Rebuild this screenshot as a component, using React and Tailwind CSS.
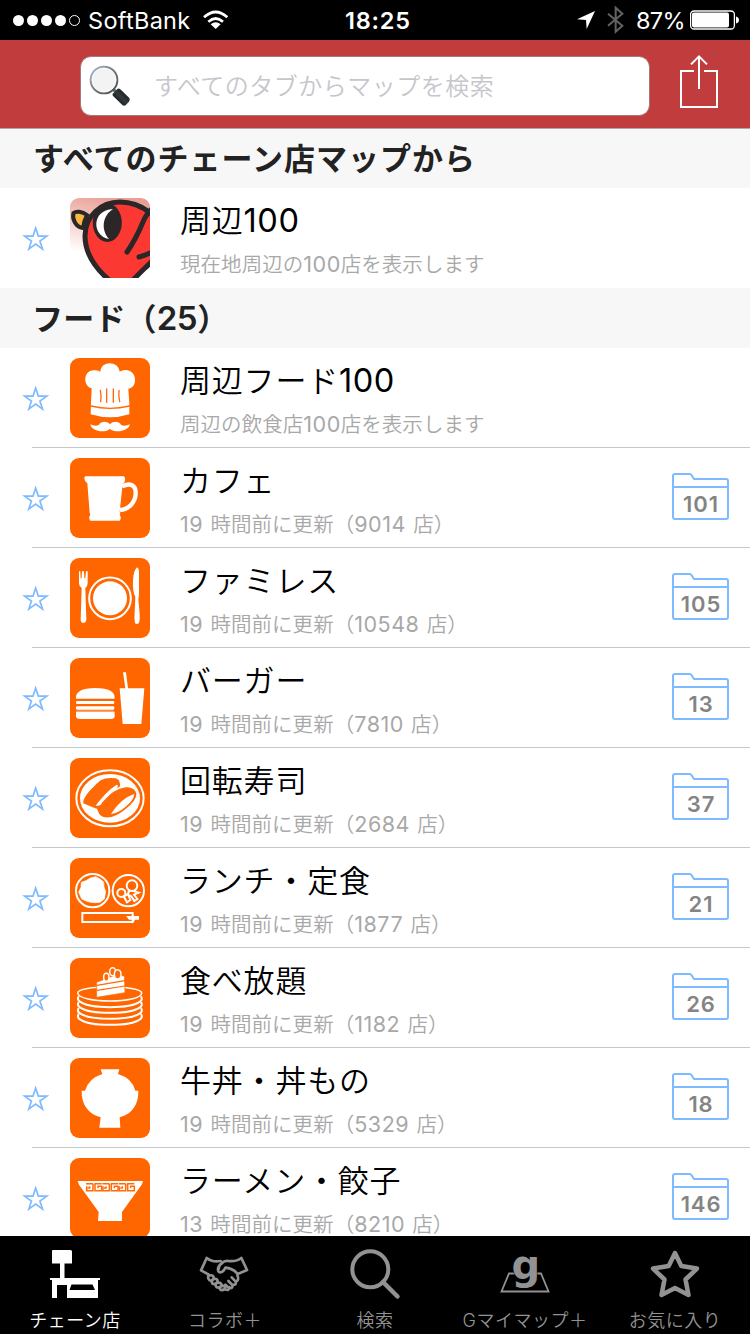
import React from "react";

const FONT = "font-['Inter','Noto_Sans_CJK_JP',sans-serif]";

function StatusBar() {
  return (
    <div className="flex h-10 items-center bg-black pl-[13px] pr-[11px] text-white">
      <div className="flex w-[332px] items-center">
        <div className="flex gap-[3px]">
          {[0, 1, 2, 3].map((n) => (
            <i key={n} className="h-[11px] w-[11px] rounded-full bg-white" />
          ))}
          <i className="h-[11px] w-[11px] rounded-full border border-white" />
        </div>
        <span className="ml-[8px] mt-px text-[23.5px] leading-10 tracking-[0.3px]">SoftBank</span>
        <svg className="ml-[12px]" width="26" height="20" viewBox="606 30 78 60">
          <g fill="none" stroke="#fff" strokeWidth="8">
            <path d="M609 52 Q644 20 679 52" />
            <path d="M622 65 Q644 46 666 65" />
          </g>
          <path d="M644 87 L629 73 Q644 61 659 73Z" fill="#fff" />
        </svg>
      </div>
      <span className="mt-px text-[23.5px] font-semibold leading-10 tracking-[0.8px]">18:25</span>
      <div className="ml-auto flex items-center">
        <svg width="18" height="18" viewBox="610 36 54 54">
          <path d="M664 36 L610 61 L637 63 L639 90Z" fill="#fff" />
        </svg>
        <svg className="ml-[12px]" width="18" height="28" viewBox="697 20 54 84">
          <path d="M700 43 L743 79 L723 97 V25 L743 43 L700 79" fill="none" stroke="#636363" strokeWidth="6" />
        </svg>
        <span className="ml-[11px] mt-px text-[23.5px] leading-10 tracking-[-0.6px]">87%</span>
        <svg className="ml-[5px]" width="49" height="20" viewBox="0 0 49 20">
          <rect x=".6" y="1" width="43.8" height="18" rx="3.5" fill="none" stroke="#fff" strokeWidth="1.3" />
          <rect x="2" y="2.6" width="37" height="14.8" rx="1.8" fill="#fff" />
          <path d="M46 6.5 Q49 7.5 49 10 Q49 12.5 46 13.5Z" fill="#fff" />
        </svg>
      </div>
    </div>
  );
}

function SearchHeader() {
  return (
    <div className="flex h-[88px] bg-[#c13c3d] pl-[80px] pt-4">
      <div className="flex h-[60px] w-[570px] items-center rounded-[11px] border border-[#a87777] bg-white pl-[7px]">
        <svg width="44" height="44" viewBox="264 194 132 132">
          <defs>
            <linearGradient id="rim" x1="0" y1="0" x2="1" y2="1">
              <stop offset="0" stopColor="#a9cdf0" />
              <stop offset=".3" stopColor="#8b9096" />
              <stop offset="1" stopColor="#44484c" />
            </linearGradient>
            <linearGradient id="handle" x1="0" y1="1" x2="1" y2="0">
              <stop offset="0" stopColor="#050606" />
              <stop offset=".5" stopColor="#34393c" />
              <stop offset="1" stopColor="#0b0c0d" />
            </linearGradient>
          </defs>
          <path d="M338 268 L350 280" stroke="#60656a" strokeWidth="9" />
          <path d="M338 283 L353 268 Q357 266 361 270 L388 296 Q391 301 387 307 L377 318 Q372 321 367 317 L340 291 Q336 287 338 283Z" fill="url(#handle)" />
          <circle cx="312" cy="242" r="40" fill="#f3f3f4" stroke="url(#rim)" strokeWidth="6" />
          <circle cx="312" cy="242" r="36" fill="none" stroke="#fff" strokeWidth="2" />
        </svg>
        <span className="ml-[22px] mt-px text-[24px] font-[350] leading-[58px] tracking-[0.5px] text-[#c6c6cc]">すべてのタブからマップを検索</span>
      </div>
      <svg className="-mt-[2px] ml-[29px]" width="40" height="56" viewBox="912 162 120 168">
        <path d="M957 213 H918 V321 H1026 V213 H987 M972 267 V170 M948 193 L972 169 L996 193" fill="none" stroke="#fff" strokeWidth="6" />
      </svg>
    </div>
  );
}

function SectionTitle({ children, first }) {
  return (
    <div className={"flex h-[60px] items-center bg-[#f7f7f7] pl-[33px] pt-px text-[31px] font-bold tracking-[1px] text-[#222]" + (first ? " border-t border-[#b2a5a5]" : "")}>
      <span className="leading-[58px]">{children}</span>
    </div>
  );
}

/* Latin digits are set slightly larger than the kana and kanji around them. */
function Mixed({ text }) {
  return text.split(/([0-9]+)/).map((part, i) =>
    i % 2 ? (
      <span key={i} className="text-[1.05em] font-normal leading-none tracking-[0.5px]">{part}</span>
    ) : (
      part
    )
  );
}

const Bird = () => (
  <>
    <defs>
      <linearGradient id="sky" x1=".6" y1="0" x2=".4" y2="1">
        <stop offset="0" stopColor="#e99f96" />
        <stop offset=".35" stopColor="#f3cbc5" />
        <stop offset=".75" stopColor="#fff" />
      </linearGradient>
    </defs>
    <rect width="80" height="80" fill="url(#sky)" />
    <g stroke="#2b2627" strokeWidth="5" strokeLinecap="round">
      <path d="M39 82 C24 69 15 54 15 38 C15 18 31 4 50 4 C74 4 96 24 94 42 C93 56 79 65 63 82" fill="#fb3832" />
      <path d="M17 17 C12 13 6 13 3.500 15 C2 20 5 29 13 30 Q14 23 17 17Z" fill="#fbb840" strokeWidth="4" />
      <path d="M84 9 Q76 16 73 24 Q66 41 57 54 M69 59 Q76 57 84 53" fill="none" />
    </g>
    <ellipse cx="37.300" cy="24.700" rx="14.500" ry="19.300" fill="#2b2627" />
    <path d="M43 11 C21 12 22 38 39 41 C31 32 32 18 43 11Z" fill="#fff" />
  </>
);

const Chef = () => (
  <g transform="scale(.33333) translate(-210 -519)">
    <path d="M273 655 L275 610 C248 604 249 556 282 556 Q291 555 301 560 C303 526 355 526 359 560 C381 547 405 560 405 584 C405 602 395 610 385 611 L388 655 V688 Q330 706 272 688Z" fill="#fff" />
    <g fill="none" stroke="#ff6a06" strokeLinecap="round">
      <path d="M273 663 Q330 677 388 663" strokeWidth="4" />
      <path d="M301 616 Q305 634 302 650 M320 612 V652 M340 612 V652 M357 616 Q355 634 359 650" strokeWidth="4" />
    </g>
    <path d="M330 718 C319 707 304 709 297 719 Q287 726 271 718 C276 742 318 744 330 731 C342 744 384 742 390 718 Q373 726 363 719 C356 709 341 707 330 718Z" fill="#fff" />
  </g>
);

const Mug = () => (
  <g transform="scale(.33333) translate(-210 -24)">
    <path d="M256 79 H372 Q379 87 372 98 L368 101 L359 186 L361 190 L359 194 Q366 204 359 212 H271 Q264 205 271 195 L269 188 L262 100 Q250 90 254 81Z" fill="#fff" />
    <path d="M366 109 C391 97 407 106 407 127 C408 157 386 178 360 180" fill="none" stroke="#fff" strokeWidth="13" />
  </g>
);

const Plate = () => (
  <g transform="scale(.33333) translate(-210 -324)" fill="#fff">
    <circle cx="330" cy="445" r="62.500" fill="none" stroke="#fff" strokeWidth="6" />
    <circle cx="330" cy="445" r="51" />
    <path d="M237 364 H241 L242 385 H245 L246 364 H252 L253 385 H256 L258 364 H263 V399 Q263 409 256 414 L259 509 Q257 519 250 519 Q243 519 242 509 L245 414 Q237 409 237 399Z" />
    <path d="M411 352 Q416 354 417 362 V435 Q414 447 416 460 Q421 500 418 516 Q414 526 405 520 Q402 507 404 487 L406 440 Q397 425 399 389 Q401 361 411 352Z" />
  </g>
);

const Burger = () => (
  <g transform="scale(.33333) translate(-210 -24)" fill="#fff">
    <path d="M228 146 Q225 114 286 114 Q347 114 344 146Z" />
    <rect x="228" y="153" width="115" height="9" rx="4" />
    <rect x="228" y="169" width="115" height="10" rx="4" />
    <rect x="229" y="181" width="113" height="4" opacity=".3" />
    <path d="M228 185 H344 V198 Q344 207 333 207 H240 Q228 207 228 198Z" />
    <path d="M359 115 H376 L369 67 H378 L384 115 H433 L424 222 H368Z" />
  </g>
);

const Sushi = () => (
  <g transform="scale(.33333) translate(-210 -324)">
    <ellipse cx="330" cy="445" rx="101" ry="84" fill="none" stroke="#fff" strokeWidth="6" />
    <ellipse cx="330" cy="445" rx="90" ry="73" fill="#fff" />
    <path d="M250 460 C247 441 283 407 302 391 Q319 381 348 385 L357 391 L360 402 Q363 411 352 413 C338 415 303 443 287 467 L324 462 Q307 475 331 492 C352 480 371 446 409 430 Q411 451 377 477 Q342 506 315 502 C297 498 296 487 291 476 Q275 472 250 460Z" fill="#ff6a06" />
    <path d="M302 466 C313 440 354 411 384 412 Q406 415 409 431 C382 437 350 469 334 492 Q309 505 299 490Z" fill="#ff6a06" />
    <path d="M289 468 Q314 427 350 404 Q362 407 340 423 L298 466Z M333 492 Q363 445 402 432 Q404 448 376 471 Q355 489 333 492Z" fill="#fff" />
  </g>
);

const Lunch = () => (
  <g transform="scale(.33333) translate(-210 -24)" fill="none" stroke="#fff" strokeWidth="6">
    <circle cx="278" cy="122" r="50" />
    <path d="M271 84 L287 80 L300 87 L311 96 L312 111 L317 125 L313 147 L300 157 L286 158 L273 157 L260 154 L245 147 L236 126 L243 112 L244 97 L258 92Z" fill="#fff" strokeWidth="2" />
    <circle cx="385" cy="122" r="47" />
    <circle cx="396" cy="107" r="16" />
    <circle cx="364" cy="129" r="12" />
    <path d="M388 119 L384 133 L371 139 L381 157 L391 150 L385 135 L394 139 L403 153 L412 147 L402 134 L416 128 L400 123" strokeWidth="6" />
    <rect x="247" y="189" width="151" height="27" />
    <path d="M378 198 H417 V209 H405 L402 216 L396 209 H387Z" fill="#fff" stroke="none" />
  </g>
);

const Buffet = () => (
  <g transform="scale(.33333) translate(-210 -324)" fill="none" stroke="#fff" strokeWidth="6">
    {[502, 484, 466, 449].map((y) => (
      <path key={y} d={`M236 ${y - 10} Q230 ${y} 240 ${y + 6} C270 ${y + 28} 390 ${y + 28} 420 ${y + 6} Q429 ${y} 423 ${y - 10}`} />
    ))}
    <path d="M233 429 C236 461 424 461 425 429 C424 405 232 405 233 429Z" strokeWidth="4.500" />
    <path d="M290 397 L347 375 L373 378 L375 428 L290 442Z" fill="#fff" stroke="#ff6a06" strokeWidth="2" />
    <path d="M291 406 L374 392 M291 421 L374 408" stroke="#ff6a06" strokeWidth="3.500" />
    <ellipse cx="338" cy="365" rx="9" ry="12" strokeWidth="4.500" />
    <ellipse cx="319" cy="382" rx="8" ry="12" fill="#ff6a06" strokeWidth="4.500" />
    <ellipse cx="353" cy="373" rx="10" ry="14" fill="#ff6a06" strokeWidth="4.500" />
  </g>
);

const Bowl = () => (
  <g transform="scale(.33333) translate(-210 -24)">
    <path d="M302 58 H358 L354 72 Q397 85 406 122 H415 C416 163 397 191 359 202 L361 233 H298 L302 202 C264 191 244 163 245 122 H255 Q266 85 307 72Z" fill="#fff" />
  </g>
);

const Ramen = () => (
  <g transform="scale(.33333) translate(-210 -324)">
    <path d="M233 393 H429 L426 403 L366 486 V513 H294 L296 486 L237 404Z" fill="#fff" />
    <g fill="none" stroke="#ff6a06" strokeWidth="4.500">
      {[258, 307, 356].map((x) => (
        <path key={x} d={`M${x + 5} 414 H${x + 11} V409 M${x + 2} 409 V422 H${x + 21} V401 M${x} 401 H${x + 21} M${x + 27} 401 V422 H${x + 47} V409 H${x + 36} V415 M${x + 25} 401 H${x + 47}`} />
      ))}
    </g>
  </g>
);

function Star() {
  return (
    <svg width="28" height="28" viewBox="-41 -41 84 84">
      <path d="M0 -35 L7.900 -10.800 L33.300 -10.800 L12.700 4.100 L20.600 28.300 L0 13.400 L-20.600 28.300 L-12.700 4.100 L-33.300 -10.800 L-7.900 -10.800Z" fill="none" stroke="#7ebaff" strokeWidth="5" />
    </svg>
  );
}

function Folder({ count }) {
  return (
    <div className="ml-auto mr-[21px] mt-[25px] grid h-[47px] w-[57px]">
      <svg className="col-start-1 row-start-1" width="57" height="47" viewBox="96 69 171 141">
        <path d="M99 111 V78 Q99 72 105 72 H149 Q153 72 155 76 L162 87 H258 Q264 87 264 93 V201 Q264 207 258 207 H105 Q99 207 99 201 V111 H264" fill="none" stroke="#7ebaff" strokeWidth="6" />
      </svg>
      <span className="col-start-1 row-start-1 pl-px pt-[16px] text-center text-[22px] font-semibold leading-[31px] tracking-[0.9px] text-[#848484]">{count}</span>
    </div>
  );
}

const Row = ({ title, sub, icon: Icon, count, line = true }) => (
  <div className="flex h-[100px] shrink-0 flex-col bg-white">
    <div className="flex h-[99px] items-start">
      <div className="ml-[22px] mt-[38px] w-12">
        <Star />
      </div>
      <svg className={"mt-[10px] h-20 w-20 rounded-[9px] " + (Icon === Bird ? "bg-white" : "bg-[#ff6600]")} viewBox="0 0 80 80">
        <Icon />
      </svg>
      <div className="ml-[30px] whitespace-nowrap">
        <div className="mt-[9px] h-[48px] text-[31px] font-[350] leading-[48px] tracking-[0.8px] text-black">
          <Mixed text={title} />
        </div>
        <div className="mt-[3px] h-[34px] text-[20.500px] font-[350] leading-[34px] tracking-[0.05px] text-[#a8a8a8] [word-spacing:1.5px]">
          <Mixed text={sub} />
        </div>
      </div>
      {count && <Folder count={count} />}
    </div>
    {line && <div className="ml-8 h-px bg-[#c8c7cc]" />}
  </div>
);

const ROWS = [
  ["周辺フード100", "周辺の飲食店100店を表示します", Chef, null],
  ["カフェ", "19 時間前に更新（9014 店）", Mug, "101"],
  ["ファミレス", "19 時間前に更新（10548 店）", Plate, "105"],
  ["バーガー", "19 時間前に更新（7810 店）", Burger, "13"],
  ["回転寿司", "19 時間前に更新（2684 店）", Sushi, "37"],
  ["ランチ・定食", "19 時間前に更新（1877 店）", Lunch, "21"],
  ["食べ放題", "19 時間前に更新（1182 店）", Buffet, "26"],
  ["牛丼・丼もの", "19 時間前に更新（5329 店）", Bowl, "18"],
  ["ラーメン・餃子", "13 時間前に更新（8210 店）", Ramen, "146"],
];

function Tab({ label, active, children }) {
  return (
    <div className={"flex w-[150px] flex-col items-center " + (active ? "text-white" : "text-[#929292]")}>
      <svg className="mt-[10px] overflow-visible" width="60" height="60" viewBox="0 0 60 60">
        {children}
      </svg>
      <span className="whitespace-nowrap text-[18px] font-[350] leading-[30px] tracking-[0.5px]">{label}</span>
    </div>
  );
}

function TabBar() {
  return (
    <div className="flex h-[98px] shrink-0 bg-black">
      <Tab label="チェーン店" active>
        <path d="M18 4 H35.500 Q37 4 37 5.500 V17.500 H29.500 V32 H65 V34 H63 V52 H32 V39 H22 V52 H17 V34 H15 V32 H25 V17.500 H17 V5 Q17 4 18 4Z M36.500 38.500 L34.500 44 H60 L57.500 38.500Z" transform="translate(-10 0)" fill="currentColor" fillRule="evenodd" />
      </Tab>
      <Tab label="コラボ＋">
        <g transform="translate(3.700 10) scale(.33333) translate(-596 -78)" fill="none" stroke="currentColor" strokeWidth="8" strokeLinejoin="round" strokeLinecap="round">
          <path d="M626 134 L603 121 L620 84 Q637 98 662 93" />
          <path d="M667 99 C655 105 652 117 655 124 C660 132 672 124 676 113 C693 114 704 121 713 132 L741 120 L724 84 Q709 96 684 93 C669 91 655 105 655 121" />
          <path d="M626 134 Q621 145 629 151 Q637 154 641 143 Q640 134 629 136 M641 146 Q632 153 637 161 Q646 166 653 154 Q652 145 642 147 M653 157 Q643 164 649 171 Q658 176 665 166 Q664 157 655 158 M665 168 Q656 175 662 180 Q673 182 676 172 Q674 166 666 168" />
          <path d="M675 178 Q688 184 688 171 M676 164 L687 174 Q700 176 697 164 M685 153 L697 165 Q712 165 706 154 M695 142 L707 155 Q719 151 712 136" />
        </g>
      </Tab>
      <Tab label="検索">
        <circle cx="25.300" cy="23.300" r="18" fill="none" stroke="currentColor" strokeWidth="4" />
        <path d="M38 36 L52.500 50.500" stroke="currentColor" strokeWidth="4.500" strokeLinecap="round" />
      </Tab>
      <Tab label="Gマイマップ＋">
        <path d="M21 27.500 H14 L6.500 45.500 H53.500 L46 27.500 H39" fill="none" stroke="currentColor" strokeWidth="1.800" />
        <text x="16.500" y="33" className="fill-[#929292] stroke-black stroke-1 font-['DejaVu_Sans','Liberation_Sans',sans-serif] text-[40px] font-bold tracking-normal [paint-order:stroke]">g</text>
      </Tab>
      <Tab label="お気に入り">
        <path d="M30 7 L36.300 20 L52 22.500 L40.500 33.500 L43.500 49 L30 42 L16.500 49 L19.500 33.500 L8 22.500 L23.700 20Z" fill="none" stroke="currentColor" strokeWidth="4.500" strokeLinejoin="round" />
      </Tab>
    </div>
  );
}

export default function App() {
  return (
    <div lang="ja" className={"flex h-[1334px] w-[750px] flex-col overflow-hidden bg-white " + FONT}>
      <StatusBar />
      <SearchHeader />
      <div className="min-h-0 flex-1 overflow-hidden">
        <SectionTitle first>すべてのチェーン店マップから</SectionTitle>
        <Row title="周辺100" sub="現在地周辺の100店を表示します" icon={Bird} line={false} />
        <SectionTitle>
          <span className="-ml-px tracking-[0.2px]">フード（</span>
          <span className="text-[33px] font-semibold leading-none tracking-[-0.5px]">25</span>）
        </SectionTitle>
        {ROWS.map(([title, sub, icon, count]) => (
          <Row key={title} title={title} sub={sub} icon={icon} count={count} />
        ))}
      </div>
      <TabBar />
    </div>
  );
}
